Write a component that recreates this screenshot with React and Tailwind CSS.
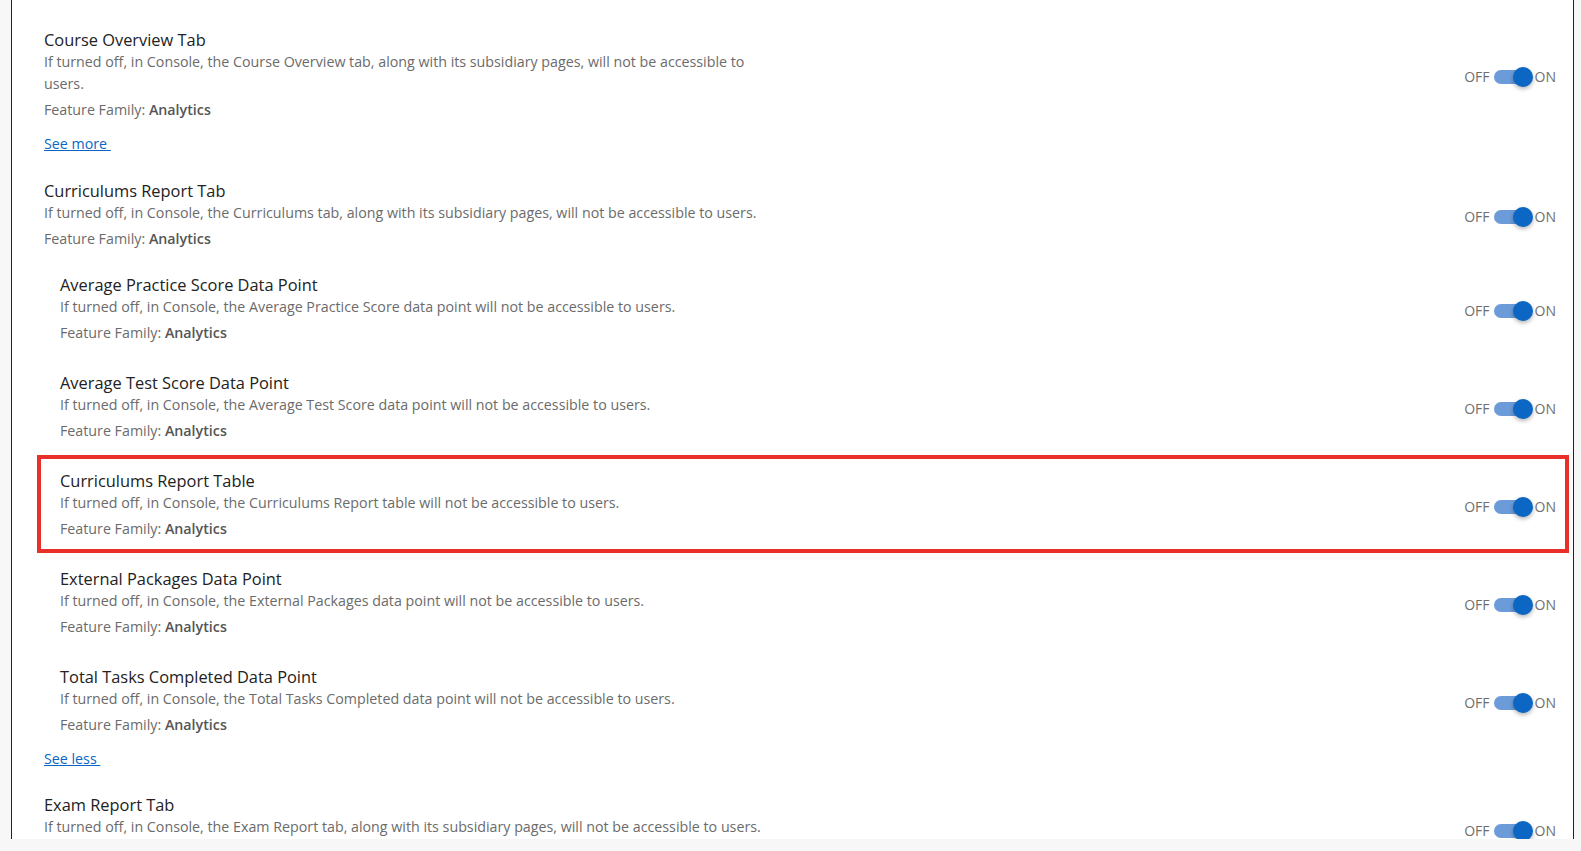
import React from "react"

const font = { fontFamily: '"Open Sans", "Noto Sans", sans-serif' }

function Toggle() {
  return (
    <div className="mt-[4px] flex shrink-0 items-center text-[14px] leading-[20px] text-[#6f6f6f]">
      <span>OFF</span>
      <div className="relative ml-[4px] flex h-[20px] w-[39px] items-center">
        <div className="h-[14px] w-[36px] rounded-full bg-[#6b9bd8]" />
        <div className="absolute right-0 top-0 h-[20px] w-[20px] rounded-full bg-[#0b66c4] shadow-[0_2px_4px_rgba(0,0,0,0.3)]" />
      </div>
      <span className="ml-[2px]">ON</span>
    </div>
  )
}

function Text({ title, desc }) {
  return (
    <div className="min-w-0">
      <div className="text-[16.4px] leading-[22px] text-[#222]">{title}</div>
      <div className="max-w-[720px] text-[14.26px] leading-[22px] text-[#6b6b6b]">{desc}</div>
      <div className="mt-[4px] text-[14.26px] leading-[22px] text-[#6b6b6b]">
        Feature Family: <span className="font-semibold text-[#555]">Analytics</span>
      </div>
    </div>
  )
}

function TopItem({ title, desc }) {
  return (
    <div className="flex items-center justify-between pl-[32px] pr-[17px]">
      <Text title={title} desc={desc} />
      <Toggle />
    </div>
  )
}

function SubItem({ title, desc, highlight }) {
  return (
    <div
      className={
        "ml-[25px] mr-[4px] flex items-center justify-between border-[4px] pb-[9px] pl-[19px] pr-[9px] pt-[11px] " +
        (highlight ? "border-[#e8302a]" : "border-transparent")
      }
    >
      <Text title={title} desc={desc} />
      <Toggle />
    </div>
  )
}

function Link({ children }) {
  return (
    <div className="pl-[32px] text-[14.26px] leading-[22px]">
      <a href="#" className="text-[#0a66c2] underline">
        {children}
      </a>
    </div>
  )
}

const subs = [
  ["Average Practice Score Data Point", "If turned off, in Console, the Average Practice Score data point will not be accessible to users."],
  ["Average Test Score Data Point", "If turned off, in Console, the Average Test Score data point will not be accessible to users."],
  ["Curriculums Report Table", "If turned off, in Console, the Curriculums Report table will not be accessible to users.", true],
  ["External Packages Data Point", "If turned off, in Console, the External Packages data point will not be accessible to users."],
  ["Total Tasks Completed Data Point", "If turned off, in Console, the Total Tasks Completed data point will not be accessible to users."],
]

export default function App() {
  return (
    <div className="h-[851px] w-full overflow-hidden bg-[#f7f7f7]" style={font}>
      <div className="ml-[11px] mr-[7px] h-[839px] overflow-hidden border-x-[1.5px] border-[#222] bg-white pt-[29px]">
        <TopItem
          title="Course Overview Tab"
          desc="If turned off, in Console, the Course Overview tab, along with its subsidiary pages, will not be accessible to users."
        />
        <div className="mt-[12px]">
          <Link>See more&nbsp;</Link>
        </div>
        <div className="mt-[25px]">
          <TopItem
            title="Curriculums Report Tab"
            desc="If turned off, in Console, the Curriculums tab, along with its subsidiary pages, will not be accessible to users."
          />
        </div>
        <div className="mt-[9px]">
          {subs.map(([t, d, h]) => (
            <SubItem key={t} title={t} desc={d} highlight={h} />
          ))}
        </div>
        <div className="-mt-[1px]">
          <Link>See less&nbsp;</Link>
        </div>
        <div className="mt-[24px]">
          <TopItem
            title="Exam Report Tab"
            desc="If turned off, in Console, the Exam Report tab, along with its subsidiary pages, will not be accessible to users."
          />
        </div>
      </div>
    </div>
  )
}
